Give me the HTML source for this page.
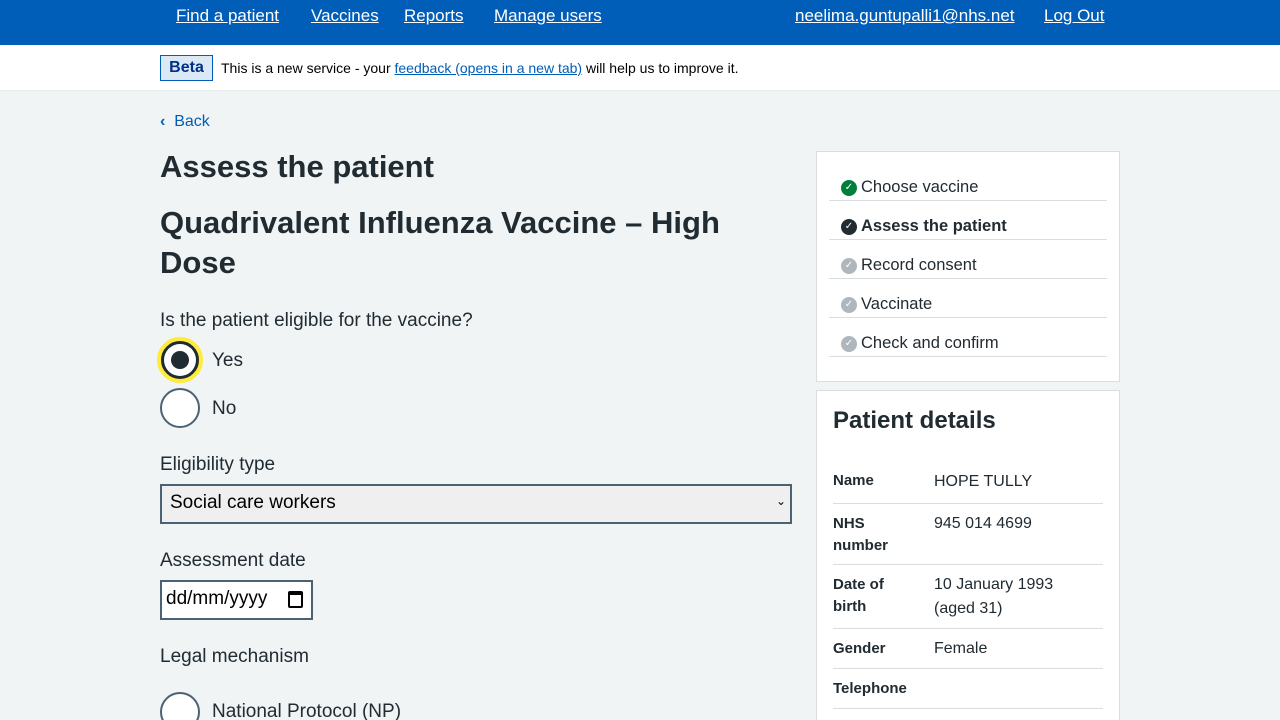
<!DOCTYPE html>
<html><head><meta charset="utf-8"><style>
*{box-sizing:border-box;margin:0;padding:0}
html,body{width:1280px;height:720px;overflow:hidden}
body{background:#f0f4f5;font-family:"Liberation Sans",sans-serif;color:#212b32;position:relative}
.hdr{background:#005eb8;height:45px;position:relative}
.hdr a{position:absolute;top:6px;color:#fff;font-size:17px;text-decoration:underline}
.beta{background:#fff;height:46px;position:relative;border-bottom:1px solid #e8edee}
.abs{position:absolute}
.radio{position:absolute;width:40px;height:40px;border:2px solid #4c6272;border-radius:50%;background:#fff}
.side{position:absolute;background:#fff;border:1px solid #d8dde0;overflow:hidden}
.step{position:absolute;left:12px;width:278px;height:39px;border-bottom:1px solid #d8dde0;font-size:16.5px}
.step i{position:absolute;left:12px;top:18px;width:16px;height:16px;border-radius:50%;color:#fff;font-style:normal;font-size:10px;text-align:center;line-height:16px}
.step span{position:absolute;left:32px;top:16px}
.row{position:absolute;left:16px;width:270px;border-bottom:1px solid #d8dde0;font-size:16px}
.row b{position:absolute;left:0;font-size:15px;line-height:22px}
.row span{position:absolute;left:101px;line-height:24px}
</style></head><body>
<div class="hdr">
<a style="left:176px">Find a patient</a><a style="left:311px">Vaccines</a><a style="left:404px">Reports</a><a style="left:494px">Manage users</a><a style="left:795px">neelima.guntupalli1@nhs.net</a><a style="left:1044px">Log Out</a>
</div>
<div class="beta"></div>
<div class="abs" style="left:160px;top:55px;width:53px;height:26px;border:1px solid #005eb8;background:#dbe8f5;color:#003087;font-weight:bold;font-size:16px;text-align:center;line-height:24px">Beta</div>
<div class="abs" style="left:221px;top:60px;font-size:14px;color:#000">This is a new service - your <a style="color:#005eb8;text-decoration:underline">feedback (opens in a new tab)</a> will help us to improve it.</div>
<div class="abs" style="left:160px;top:113px;font-size:16px;color:#005eb8"><b>‹</b>&nbsp; Back</div>
<div class="abs" style="left:160px;top:149px;font-size:31px;font-weight:bold">Assess the patient</div>
<div class="abs" style="left:160px;top:203px;width:620px;font-size:31px;font-weight:bold;line-height:40px">Quadrivalent Influenza Vaccine – High Dose</div>
<div class="abs" style="left:160px;top:310px;font-size:19px">Is the patient eligible for the vaccine?</div>
<div class="radio" style="left:157px;top:337px;width:46px;height:46px;border:4px solid #ffeb3b;background:#212b32"><div style="position:absolute;left:3px;top:3px;width:32px;height:32px;border-radius:50%;background:#fff"></div><div style="position:absolute;left:10px;top:10px;width:18px;height:18px;border-radius:50%;background:#212b32"></div></div>
<div class="abs" style="left:212px;top:350px;font-size:19px">Yes</div>
<div class="radio" style="left:160px;top:388px"></div>
<div class="abs" style="left:212px;top:398px;font-size:19px">No</div>
<div class="abs" style="left:160px;top:454px;font-size:19px">Eligibility type</div>
<div class="abs" style="left:160px;top:484px;width:632px;height:40px;border:2px solid #4c6272;background:#efefef;font-size:19px;padding:6px 8px;color:#000">Social care workers<span style="position:absolute;right:4px;top:8px;font-size:12px">⌄</span></div>
<div class="abs" style="left:160px;top:550px;font-size:19px">Assessment date</div>
<div class="abs" style="left:160px;top:580px;width:153px;height:40px;border:2px solid #4c6272;background:#fff;font-size:19px;padding:6px 4px;color:#000">dd/mm/yyyy <span style="position:absolute;right:8px;top:9px;width:15px;height:17px;border:2px solid #000;border-top-width:4px;border-radius:2px"></span></div>
<div class="abs" style="left:160px;top:646px;font-size:19px">Legal mechanism</div>
<div class="radio" style="left:160px;top:692px"></div>
<div class="abs" style="left:212px;top:701px;font-size:19px">National Protocol (NP)</div>

<div class="side" style="left:816px;top:151px;width:304px;height:231px">
<div class="step" style="top:10px"><i style="background:#007f3b">✓</i><span>Choose vaccine</span></div>
<div class="step" style="top:49px"><i style="background:#212b32">✓</i><span style="font-weight:bold">Assess the patient</span></div>
<div class="step" style="top:88px"><i style="background:#aeb7bd">✓</i><span>Record consent</span></div>
<div class="step" style="top:127px"><i style="background:#aeb7bd">✓</i><span>Vaccinate</span></div>
<div class="step" style="top:166px"><i style="background:#aeb7bd">✓</i><span>Check and confirm</span></div>
</div>
<div class="side" style="left:816px;top:390px;width:304px;height:340px">
<div class="abs" style="left:16px;top:16px;font-size:24px;font-weight:bold">Patient details</div>
<div class="row" style="top:68px;height:45px"><b style="top:11px">Name</b><span style="top:11px">HOPE TULLY</span></div>
<div class="row" style="top:113px;height:61px"><b style="top:9px">NHS<br>number</b><span style="top:8px">945 014 4699</span></div>
<div class="row" style="top:174px;height:64px"><b style="top:9px">Date of<br>birth</b><span style="top:8px">10 January 1993<br>(aged 31)</span></div>
<div class="row" style="top:238px;height:40px"><b style="top:9px">Gender</b><span style="top:8px">Female</span></div>
<div class="row" style="top:278px;height:40px"><b style="top:9px">Telephone</b></div>
</div>
</body></html>
